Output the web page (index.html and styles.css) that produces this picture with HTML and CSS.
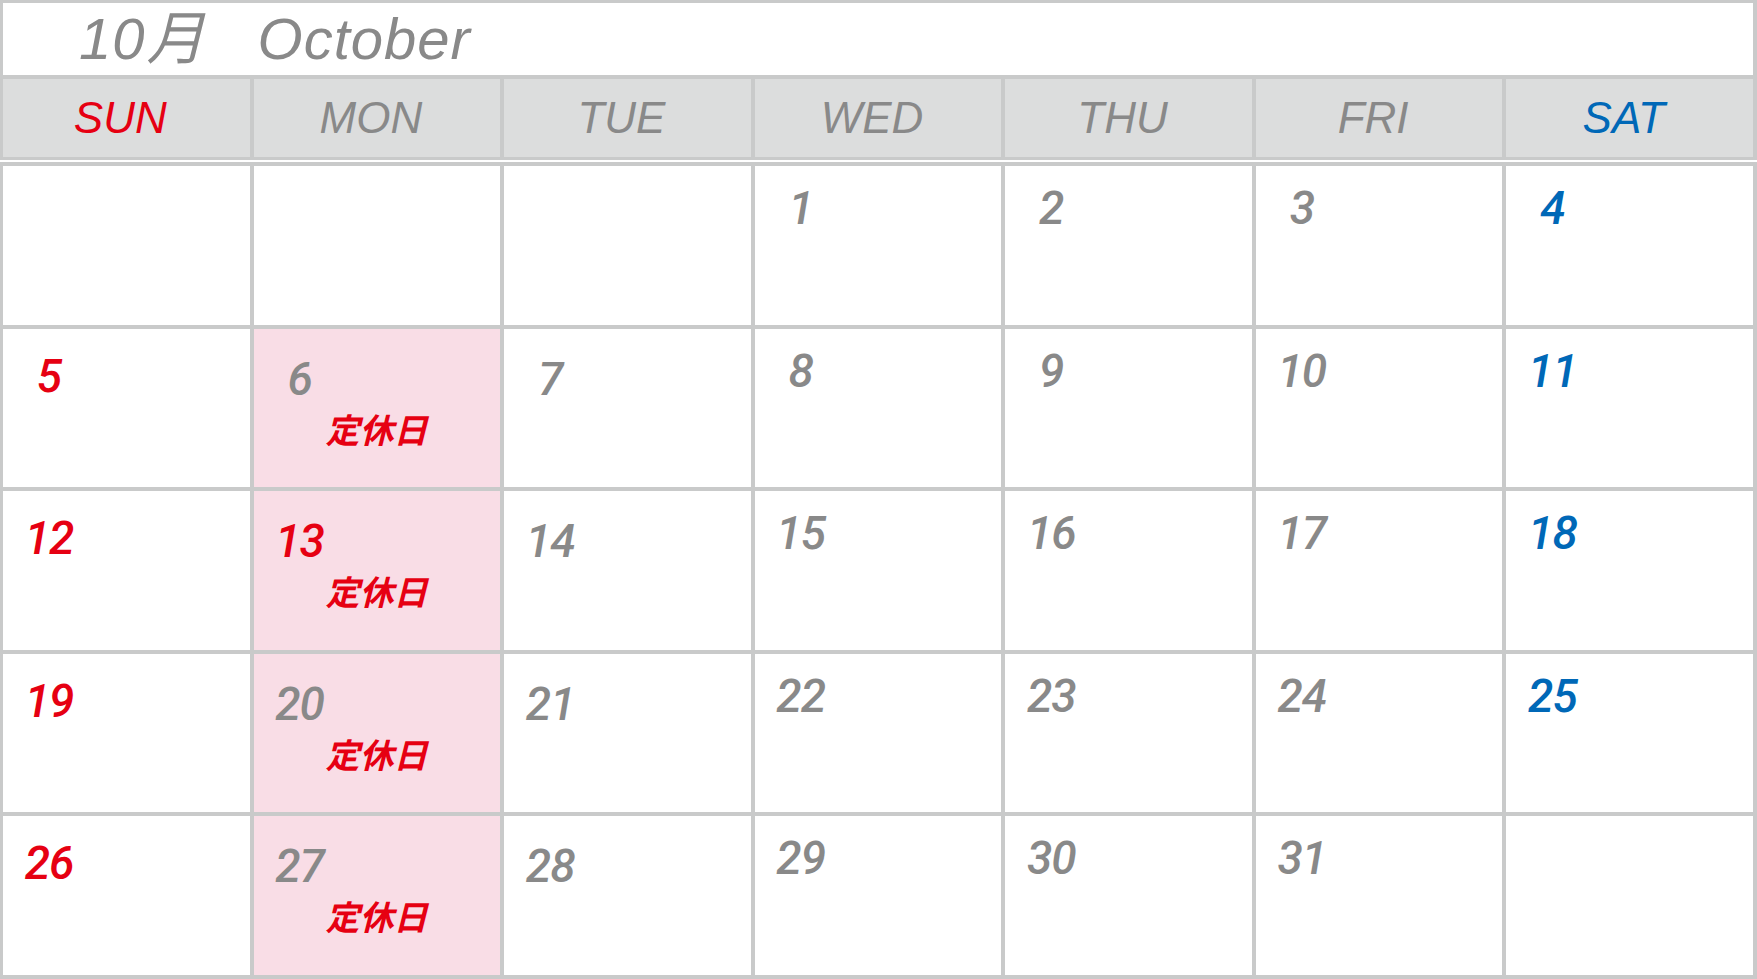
FILE: index.html
```html
<!DOCTYPE html>
<html lang="ja">
<head>
<meta charset="utf-8">
<title>10月 October</title>
<link rel="stylesheet" href="styles.css">
</head>
<body>
<div class="cal">
  <div class="title">1<span class="gap">0</span>月<span class="wsp">　</span>October</div>
  <div class="head">
    <div class="hd sun">SUN</div>
    <div class="hd">MON</div>
    <div class="hd">TUE</div>
    <div class="hd">WED</div>
    <div class="hd">THU</div>
    <div class="hd">FRI</div>
    <div class="hd sat">SAT</div>
  </div>
  <div class="sep"></div>
  <div class="grid">
    <div class="cell c0"></div>
    <div class="cell c1"></div>
    <div class="cell c2"></div>
    <div class="cell c3"><div class="num">1</div></div>
    <div class="cell c4"><div class="num">2</div></div>
    <div class="cell c5"><div class="num">3</div></div>
    <div class="cell c6"><div class="num">4</div></div>

    <div class="cell c0"><div class="num">5</div></div>
    <div class="cell c1 off"><div class="num">6</div><div class="hol">定休日</div></div>
    <div class="cell c2"><div class="num">7</div></div>
    <div class="cell c3"><div class="num">8</div></div>
    <div class="cell c4"><div class="num">9</div></div>
    <div class="cell c5"><div class="num">10</div></div>
    <div class="cell c6"><div class="num">11</div></div>

    <div class="cell c0"><div class="num">12</div></div>
    <div class="cell c1 off red"><div class="num">13</div><div class="hol">定休日</div></div>
    <div class="cell c2"><div class="num">14</div></div>
    <div class="cell c3"><div class="num">15</div></div>
    <div class="cell c4"><div class="num">16</div></div>
    <div class="cell c5"><div class="num">17</div></div>
    <div class="cell c6"><div class="num">18</div></div>

    <div class="cell c0"><div class="num">19</div></div>
    <div class="cell c1 off"><div class="num">20</div><div class="hol">定休日</div></div>
    <div class="cell c2"><div class="num">21</div></div>
    <div class="cell c3"><div class="num">22</div></div>
    <div class="cell c4"><div class="num">23</div></div>
    <div class="cell c5"><div class="num">24</div></div>
    <div class="cell c6"><div class="num">25</div></div>

    <div class="cell c0"><div class="num">26</div></div>
    <div class="cell c1 off"><div class="num">27</div><div class="hol">定休日</div></div>
    <div class="cell c2"><div class="num">28</div></div>
    <div class="cell c3"><div class="num">29</div></div>
    <div class="cell c4"><div class="num">30</div></div>
    <div class="cell c5"><div class="num">31</div></div>
    <div class="cell c6"></div>
  </div>
</div>
</body>
</html>
```

FILE: styles.css
```css
html, body {
  margin: 0;
  padding: 0;
  background: #ffffff;
}

.cal {
  width: 1757px;
  height: 979px;
  box-sizing: border-box;
  background: #c9caca;
  padding: 3px 4px 4px 3px;
  display: flex;
  flex-direction: column;
  font-family: "Liberation Sans", Arial, "Noto Sans CJK JP", sans-serif;
  color: #898989;
}

.title {
  height: 72px;
  background: #ffffff;
  font-size: 58px;
  line-height: 72px;
  font-style: italic;
  padding-left: 76px;
  letter-spacing: 1px;
  white-space: pre;
}

.title .gap {
  letter-spacing: 2px;
}

.title .wsp {
  letter-spacing: -6px;
}

.head {
  margin-top: 4px;
  height: 78px;
  display: grid;
  grid-template-columns: repeat(7, 1fr);
  column-gap: 4px;
}

.hd {
  background: #dcdddd;
  text-align: center;
  font-size: 44px;
  line-height: 78px;
  font-style: italic;
  padding-right: 12px;
}

.sun { color: #e60012; }
.sat { color: #0068b7; }

.sep {
  height: 2px;
  margin: 3px -4px 4px -3px;
  background: #ffffff;
}

.grid {
  flex: 1;
  display: grid;
  grid-template-columns: repeat(7, 1fr);
  grid-template-rows: repeat(5, 1fr);
  gap: 4px;
}

.cell {
  background: #ffffff;
  padding-top: 19px;
}

.cell.off {
  background: #f9dde6;
}

.num {
  width: 92px;
  text-align: center;
  font-family: Roboto, "Liberation Sans", sans-serif;
  font-size: 46px;
  line-height: 46px;
  font-weight: 500;
  font-style: italic;
  letter-spacing: -1px;
  color: #898989;
}

.c0 { padding-top: 24px; }
.c1, .c2 { padding-top: 27px; }

.c0 .num, .red .num { color: #e60012; }
.c6 .num { color: #0068b7; }

.hol {
  margin-top: 10px;
  margin-left: 72px;
  font-family: "Noto Sans CJK JP", sans-serif;
  font-size: 34px;
  line-height: 34px;
  font-weight: 700;
  font-style: italic;
  color: #e60012;
}
```
